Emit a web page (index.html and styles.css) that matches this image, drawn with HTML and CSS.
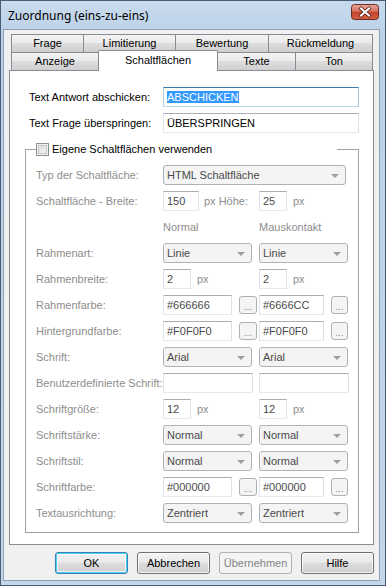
FILE: index.html
```html
<!DOCTYPE html>
<html lang="de">
<head>
  <meta charset="UTF-8">
  <title>Zuordnung (eins-zu-eins)</title>
  <link rel="stylesheet" href="styles.css">
</head>
<body>
  <div class="window">
    <div class="titlebar">
      <span class="title">Zuordnung (eins-zu-eins)</span>
      <span class="close">
        <svg width="28" height="16" viewBox="0 0 28 16">
          <defs>
            <linearGradient id="cg" x1="0" y1="0" x2="0" y2="1">
              <stop offset="0" stop-color="#e8a89a"/>
              <stop offset="0.45" stop-color="#d47562"/>
              <stop offset="0.5" stop-color="#c5442c"/>
              <stop offset="1" stop-color="#d0603f"/>
            </linearGradient>
          </defs>
          <rect x="0.5" y="0.5" width="27" height="15" rx="3" fill="url(#cg)" stroke="#6e2a2a"/>
          <path d="M10 4.5 L18 11.5 M18 4.5 L10 11.5" stroke="#5a2020" stroke-width="3.6" stroke-linecap="square"/>
          <path d="M10 4.5 L18 11.5 M18 4.5 L10 11.5" stroke="#ffffff" stroke-width="2" stroke-linecap="square"/>
        </svg>
      </span>
    </div>

    <div class="client">
      <div class="tabstrip">
        <div class="tabrow">
          <div class="tab t-frage">Frage</div>
          <div class="tab t-limit">Limitierung</div>
          <div class="tab t-bewert">Bewertung</div>
          <div class="tab t-rueck">Rückmeldung</div>
        </div>
        <div class="tabrow front">
          <div class="tab t-anzeige">Anzeige</div>
          <div class="tab t-schalt active">Schaltflächen</div>
          <div class="tab t-texte">Texte</div>
          <div class="tab t-ton">Ton</div>
        </div>
      </div>

      <div class="panel">
        <div class="textrow">
          <span class="lbl">Text Antwort abschicken:</span>
          <div class="edit wide focus"><span class="sel">ABSCHICKEN</span></div>
        </div>
        <div class="textrow">
          <span class="lbl">Text Frage überspringen:</span>
          <div class="edit wide">ÜBERSPRINGEN</div>
        </div>

        <fieldset class="group">
          <legend><span class="check"></span>Eigene Schaltflächen verwenden</legend>
          <div class="grid">
            <span class="lbl">Typ der Schaltfläche:</span>
            <div class="combo full">HTML Schaltfläche<span class="arrow"></span></div>

            <span class="lbl">Schaltfläche - Breite:</span>
            <div class="cell"><div class="edit w35">150</div><span class="unit near">px Höhe:</span></div>
            <div class="cell"><div class="edit w27">25</div><span class="unit">px</span></div>

            <span class="lbl"></span>
            <span class="lbl head">Normal</span>
            <span class="lbl head">Mauskontakt</span>

            <span class="lbl">Rahmenart:</span>
            <div class="combo">Linie<span class="arrow"></span></div>
            <div class="combo">Linie<span class="arrow"></span></div>

            <span class="lbl">Rahmenbreite:</span>
            <div class="cell"><div class="edit w27">2</div><span class="unit">px</span></div>
            <div class="cell"><div class="edit w27">2</div><span class="unit">px</span></div>

            <span class="lbl">Rahmenfarbe:</span>
            <div class="cell"><div class="edit w68 color">#666666</div><span class="dots">...</span></div>
            <div class="cell"><div class="edit w68 color">#6666CC</div><span class="dots">...</span></div>

            <span class="lbl">Hintergrundfarbe:</span>
            <div class="cell"><div class="edit w68 color">#F0F0F0</div><span class="dots">...</span></div>
            <div class="cell"><div class="edit w68 color">#F0F0F0</div><span class="dots">...</span></div>

            <span class="lbl">Schrift:</span>
            <div class="combo">Arial<span class="arrow"></span></div>
            <div class="combo">Arial<span class="arrow"></span></div>

            <span class="lbl">Benutzerdefinierte Schrift:</span>
            <div class="edit w90"></div>
            <div class="edit w90"></div>

            <span class="lbl">Schriftgröße:</span>
            <div class="cell"><div class="edit w27">12</div><span class="unit">px</span></div>
            <div class="cell"><div class="edit w27">12</div><span class="unit">px</span></div>

            <span class="lbl">Schriftstärke:</span>
            <div class="combo">Normal<span class="arrow"></span></div>
            <div class="combo">Normal<span class="arrow"></span></div>

            <span class="lbl">Schriftstil:</span>
            <div class="combo">Normal<span class="arrow"></span></div>
            <div class="combo">Normal<span class="arrow"></span></div>

            <span class="lbl">Schriftfarbe:</span>
            <div class="cell"><div class="edit w68 color">#000000</div><span class="dots">...</span></div>
            <div class="cell"><div class="edit w68 color">#000000</div><span class="dots">...</span></div>

            <span class="lbl">Textausrichtung:</span>
            <div class="combo">Zentriert<span class="arrow"></span></div>
            <div class="combo">Zentriert<span class="arrow"></span></div>
          </div>
        </fieldset>
      </div>

      <div class="buttons">
        <button class="btn default">OK</button>
        <button class="btn">Abbrechen</button>
        <button class="btn disabled">Übernehmen</button>
        <button class="btn">Hilfe</button>
      </div>
    </div>
  </div>
</body>
</html>
```

FILE: styles.css
```css
body {
  margin: 0;
  font-family: 'Liberation Sans', Arial, sans-serif;
  font-size: 11px;
  color: #000;
  background: #fff;
}

.window {
  width: 386px;
  height: 586px;
  box-sizing: border-box;
  border: 1px solid #4b5d75;
  background: linear-gradient(to bottom, #c9dbee, #bcd1e8 30px, #c3d6ea);
  display: flex;
  flex-direction: column;
  padding: 0 5px 4px 2px;
}

.titlebar {
  height: 28px;
  display: flex;
  align-items: center;
  justify-content: space-between;
  padding: 0 0 0 5px;
}

.title {
  font-family: 'Noto Sans', 'Liberation Sans', sans-serif;
  font-size: 12px;
  color: #000;
  margin-top: 1px;
}

.close {
  display: flex;
  margin-top: -6px;
  margin-right: 1px;
}

.client {
  flex: 1;
  background: #f0f0f0;
  border: 1px solid #8da2ba;
  padding: 4px 5px 0 5px;
}

/* tabs */
.tabstrip {
  padding-left: 2px;
}

.tabrow {
  display: flex;
  height: 18px;
}

.tab {
  box-sizing: border-box;
  height: 18px;
  border: 1px solid #898c95;
  border-bottom: none;
  margin-left: -1px;
  background: linear-gradient(to bottom, #f2f2f2, #ebebeb 45%, #dddddd 50%, #cfcfcf);
  text-align: center;
  line-height: 17px;
}

.tab:first-child {
  margin-left: 0;
}

.t-frage { width: 73px; }
.t-limit { width: 93px; }
.t-bewert { width: 94px; }
.t-rueck { width: 105px; }

.t-anzeige { width: 88px; }
.t-schalt { width: 120px; }
.t-texte { width: 79px; }
.t-ton { width: 78px; }

.tab.active {
  position: relative;
  z-index: 2;
  background: #fff;
  height: 21px;
  margin-top: -2px;
  line-height: 18px;
  border-radius: 2px 2px 0 0;
}

/* panel */
.panel {
  background: #fff;
  border: 1px solid #898c95;
  height: 475px;
  box-sizing: border-box;
  padding: 16px 0 0 15px;
}

.textrow {
  display: flex;
  align-items: center;
  height: 20px;
  margin-bottom: 6px;
  padding-left: 4px;
}

.textrow .lbl {
  width: 134px;
}

.lbl {
  white-space: nowrap;
}

.edit {
  box-sizing: border-box;
  height: 20px;
  border: 1px solid #abadb3;
  border-color: #abadb3 #dbdfe6 #e3e9ef #e2e3ea;
  background: #fff;
  padding: 0 3px;
  line-height: 18px;
  color: #000;
}

.edit.wide {
  width: 196px;
}

.edit.focus {
  border-color: #3d7bad #a4c9e3 #b7d9ed #b5cfe7;
}

.sel {
  background: #3399ff;
  color: #fff;
}

/* group */
.group {
  width: 334px;
  box-sizing: border-box;
  margin: 10px 0 0 0;
  border: 1px solid #a0a0a0;
  padding: 9px 0 9px 10px;
}

.group legend {
  width: 301px;
  box-sizing: border-box;
  padding: 0;
  height: 13px;
  line-height: 13px;
  background: #fff;
  display: flex;
  align-items: center;
}

.check {
  width: 13px;
  height: 13px;
  box-sizing: border-box;
  border: 1px solid #8e8f8f;
  background: linear-gradient(135deg, #dcdcdc, #f6f6f6);
  box-shadow: inset 0 0 0 1px #f4f4f4, inset 0 0 0 2px #c5c5c5;
  margin-right: 3px;
}

.grid {
  display: grid;
  grid-template-columns: 127px 96px 89px;
  grid-auto-rows: 20px;
  row-gap: 6px;
  align-items: center;
  color: #8d8d8d;
}

.grid .edit {
  color: #4a4a4a;
}

.cell {
  display: flex;
  align-items: center;
  height: 20px;
}

.unit {
  margin-left: 6px;
}

.unit.near {
  margin-left: 5px;
}

.w27 { width: 28px; }
.w35 { width: 36px; }
.w68 { width: 69px; }
.w90 { width: 90px; }

.combo {
  position: relative;
  box-sizing: border-box;
  width: 89px;
  height: 20px;
  border: 1px solid #adb2b5;
  border-radius: 3px;
  background: #f4f4f4;
  padding-left: 3px;
  line-height: 18px;
  color: #4a4a4a;
}

.combo.full {
  grid-column: 2 / 4;
  width: 183px;
}

.arrow {
  position: absolute;
  right: 6px;
  top: 8px;
  border-left: 4px solid transparent;
  border-right: 4px solid transparent;
  border-top: 4px solid #a0a0a0;
}

.dots {
  box-sizing: border-box;
  width: 18px;
  height: 18px;
  margin-left: 7px;
  border: 1px solid #adb2b5;
  border-radius: 3px;
  background: #f4f4f4;
  text-align: center;
  line-height: 20px;
  font-size: 10px;
  color: #8d8d8d;
}

/* bottom buttons */
.buttons {
  display: flex;
  justify-content: flex-end;
  gap: 9px;
  padding: 7px 0 0 0;
}

.btn {
  width: 73px;
  height: 22px;
  box-sizing: border-box;
  border: 1px solid #707070;
  border-radius: 3px;
  background: linear-gradient(to bottom, #f2f2f2, #ebebeb 45%, #dddddd 50%, #cfcfcf);
  box-shadow: inset 0 0 0 1px rgba(255, 255, 255, 0.8);
  font-family: 'Liberation Sans', Arial, sans-serif;
  font-size: 11px;
  color: #000;
  padding: 0;
}

.btn.default {
  border-color: #3c7fb1;
  box-shadow: inset 0 0 0 1px #48d1f8, inset 0 0 0 2px rgba(255, 255, 255, 0.6);
}

.btn.disabled {
  border-color: #adb2b5;
  background: #f4f4f4;
  box-shadow: none;
  color: #838383;
}
```
